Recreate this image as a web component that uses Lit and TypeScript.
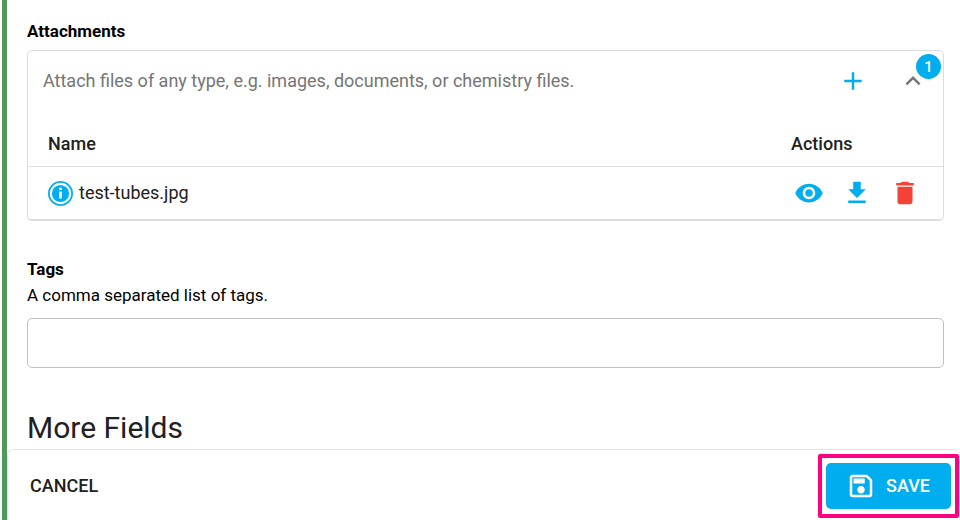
import { LitElement, html, css, svg } from "lit";
import { customElement, property, state } from "lit/decorators.js";

const PATHS: Record<string, string> = {
  add: "M19 13h-6v6h-2v-6H5v-2h6V5h2v6h6v2z",
  collapse: "M12 8l-6 6 1.41 1.41L12 10.83l4.59 4.58L18 14z",
  expand: "M16.59 8.59L12 13.17 7.41 8.59 6 10l6 6 6-6z",
  view: "M12 4.5C7 4.5 2.73 7.61 1 12c1.73 4.39 6 7.5 11 7.5s9.27-3.11 11-7.5c-1.73-4.39-6-7.5-11-7.5zM12 17c-2.76 0-5-2.24-5-5s2.24-5 5-5 5 2.24 5 5-2.24 5-5 5zm0-8c-1.66 0-3 1.34-3 3s1.34 3 3 3 3-1.34 3-3-1.34-3-3-3z",
  download: "M19 9h-4V3H9v6H5l7 7 7-7zM5 18v2h14v-2H5z",
  remove: "M6 19c0 1.1.9 2 2 2h8c1.1 0 2-.9 2-2V7H6v12zM19 4h-3.5l-1-1h-5l-1 1H5v2h14V4z",
  save: "M17 3H5c-1.11 0-2 .9-2 2v14c0 1.1.89 2 2 2h14c1.1 0 2-.9 2-2V7l-4-4zm2 16H5V5h11.17L19 7.83V19zm-7-7c-1.66 0-3 1.34-3 3s1.34 3 3 3 3-1.34 3-3-1.34-3-3-3zM6 6h9v4H6z",
};

@customElement("mat-icon")
export class MatIcon extends LitElement {
  @property() name = "add";

  static styles = css`
    :host { display: block; width: 30px; height: 30px; }
    .icon { display: block; width: 100%; height: 100%; fill: currentColor; }
  `;

  render() {
    return html`<svg class="icon" viewBox="0 0 24 24" aria-hidden="true">
      ${svg`<path d=${PATHS[this.name]}></path>`}
    </svg>`;
  }
}

@customElement("app-root")
export class AppRoot extends LitElement {
  @state() private open = true;
  @state() private files = ["test-tubes.jpg"];

  static styles = css`
    :host {
      display: flex;
      flex-direction: column;
      box-sizing: border-box;
      min-height: 100vh;
      margin-left: 2px;
      border-left: 5px solid #4f9a58;
      background: #fff;
      color: #212121;
      font-family: Roboto, "Liberation Sans", sans-serif;
      font-size: 18px;
      line-height: 24px;
    }
    * { box-sizing: border-box; }
    button { font: inherit; border: 0; background: none; padding: 0; cursor: pointer; }

    .form { padding: 19px 16px 0 20px; }
    .label { display: block; margin: 0; font-size: 17px; font-weight: 700; color: #000; }
    .help { margin: 2px 0 11px; font-size: 17px; color: #000; }

    .card {
      margin: 7px 0 36px;
      border: 1px solid #dcdcdc;
      border-radius: 5px;
    }
    .summary {
      position: relative;
      display: flex;
      align-items: center;
      gap: 15px;
      min-height: 60px;
      padding: 0 8px 0 15px;
    }
    .hint { flex: 1; margin: 0; color: #757575; }
    .round {
      display: flex;
      align-items: center;
      justify-content: center;
      width: 45px;
      height: 45px;
      border-radius: 50%;
      color: #00aeef;
    }
    .toggle { color: #757575; }
    .badge {
      position: absolute;
      top: 3px;
      right: 2px;
      width: 25px;
      height: 25px;
      border-radius: 50%;
      background: #00aeef;
      color: #fff;
      font-size: 15px;
      font-weight: 500;
      line-height: 26px;
      text-align: center;
    }

    .files { width: 100%; margin-top: 10px; border-collapse: separate; border-spacing: 0; }
    .files th {
      height: 46px;
      padding: 0 20px;
      border-bottom: 1px solid #e0e0e0;
      font-weight: 500;
      text-align: left;
    }
    .files td { height: 53px; padding: 0 20px; border-bottom: 1px solid #e0e0e0; }
    .files .ops-head { width: 172px; }
    .files .ops-cell { padding: 0 14px; }
    .ops { display: flex; }
    .ops .round { width: 48px; }
    .ops .danger { color: #f44336; }
    .file { display: flex; align-items: center; gap: 6px; }
    .info { width: 25px; height: 25px; }

    .tags {
      display: block;
      width: 100%;
      height: 50px;
      padding: 0 16px;
      border: 1px solid #c0c0c0;
      border-radius: 5px;
      background: #fff;
      font: inherit;
    }
    .heading { margin: 41px 0 2px; font-size: 30px; font-weight: 400; line-height: 38px; }

    .footer {
      display: flex;
      flex: 1;
      align-items: center;
      justify-content: space-between;
      padding: 12px 9px 10px 16px;
      border: 1px solid #e4e4e4;
      border-width: 1px 0 0 1px;
      border-radius: 6px 6px 0 0;
    }
    .cancel { height: 46px; padding: 0 6px; color: #212121; font-weight: 500; }
    .spot { position: relative; }
    .spot::after {
      content: "";
      position: absolute;
      inset: -9px -8px;
      border: 4px solid #ff0080;
      border-radius: 2px;
      pointer-events: none;
    }
    .save {
      display: flex;
      align-items: center;
      gap: 10px;
      height: 46px;
      padding: 0 20px;
      padding-right: 21px;
      border-radius: 5px;
      background: #00aeef;
      color: #fff;
      font-weight: 500;
    }
  `;

  private removeFile(name: string) {
    this.files = this.files.filter((f) => f !== name);
  }

  private row(name: string) {
    return html`<tr>
      <td>
        <div class="file">
          <svg class="info" viewBox="0 0 25 25" aria-hidden="true">
            <circle cx="12.5" cy="12.5" r="11.6" fill="none" stroke="#00aeef" stroke-width="1.8"></circle>
            <circle cx="12.5" cy="12.5" r="8.6" fill="#00aeef"></circle>
            <path d="M11.200 6.800h2.600v2.300h-2.600zM11.200 10.500h2.600v7h-2.600z" fill="#fff"></path>
          </svg>
          <span>${name}</span>
        </div>
      </td>
      <td class="ops-cell">
        <div class="ops">
          <button class="round" type="button" aria-label="Preview"><mat-icon name="view"></mat-icon></button>
          <button class="round" type="button" aria-label="Download"><mat-icon name="download"></mat-icon></button>
          <button class="round danger" type="button" aria-label="Delete" @click=${() => this.removeFile(name)}>
            <mat-icon name="remove"></mat-icon>
          </button>
        </div>
      </td>
    </tr>`;
  }

  render() {
    return html`
      <main class="form">
        <h3 class="label">Attachments</h3>
        <section class="card">
          <div class="summary">
            <p class="hint">Attach files of any type, e.g. images, documents, or chemistry files.</p>
            <button class="round" type="button" aria-label="Add file"><mat-icon name="add"></mat-icon></button>
            <button
              class="round toggle"
              type="button"
              aria-label="Toggle attachments"
              aria-expanded=${this.open ? "true" : "false"}
              @click=${() => (this.open = !this.open)}
            >
              <mat-icon name=${this.open ? "collapse" : "expand"}></mat-icon>
            </button>
            <span class="badge">${this.files.length}</span>
          </div>
          ${this.open
            ? html`<table class="files">
                <thead>
                  <tr><th>Name</th><th class="ops-head">Actions</th></tr>
                </thead>
                <tbody>${this.files.map((f) => this.row(f))}</tbody>
              </table>`
            : null}
        </section>
        <label class="label" for="tags">Tags</label>
        <p class="help" id="tags-help">A comma separated list of tags.</p>
        <input class="tags" id="tags" type="text" aria-describedby="tags-help" />
        <h2 class="heading">More Fields</h2>
      </main>
      <footer class="footer">
        <button class="cancel" type="button">CANCEL</button>
        <div class="spot">
          <button class="save" type="button"><mat-icon name="save"></mat-icon>SAVE</button>
        </div>
      </footer>
    `;
  }
}
